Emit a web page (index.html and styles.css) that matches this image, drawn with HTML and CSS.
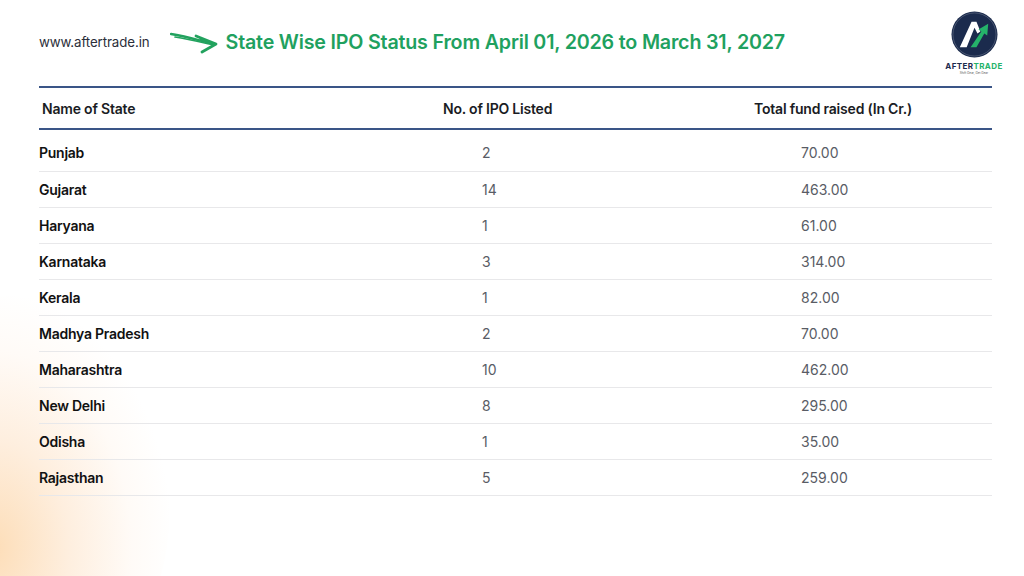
FILE: index.html
```html
<!DOCTYPE html>
<html lang="en">
<head>
<meta charset="utf-8">
<title>State Wise IPO Status</title>
<link rel="stylesheet" href="styles.css">
</head>
<body>
<div class="page">
  <div class="glow"></div>
  <header class="top">
    <div class="site">www.aftertrade.in</div>
    <svg class="arrow" viewBox="0 0 50 24" width="50" height="24" aria-hidden="true">
      <path d="M1 4 C 14 6, 28 10, 44 14" fill="none" stroke="#22a25e" stroke-width="2.4" stroke-linecap="round"/>
      <path d="M5 7 C 18 9, 30 12, 43 15" fill="none" stroke="#22a25e" stroke-width="1.6" stroke-linecap="round"/>
      <path d="M26 6 L 46 14 L 32 22" fill="none" stroke="#22a25e" stroke-width="2.8" stroke-linecap="round" stroke-linejoin="round"/>
      <path d="M30 9 L 42 14" fill="none" stroke="#22a25e" stroke-width="1.4" stroke-linecap="round"/>
    </svg>
    <h1 class="title">State Wise IPO Status From April 01, 2026 to March 31, 2027</h1>
    <div class="logo">
      <svg viewBox="0 0 48 48" width="47" height="47" aria-hidden="true">
        <circle cx="24" cy="24" r="23.5" fill="#1b2b4d"/>
        <circle cx="24" cy="24" r="22" fill="none" stroke="#ffffff" stroke-width="0.5" opacity="0.4"/>
        <polygon points="9,37 21,11 26,11 30,21 27,23 24,17 16,37" fill="#ffffff"/>
        <polygon points="20,37 31,21 28,19 38,13 37,25 34,23 26,37" fill="#25b36a"/>
      </svg>
      <div class="brand"><span class="after">AFTER</span><span class="trade">TRADE</span></div>
      <div class="tag">Shift Gear, Get Gear</div>
    </div>
  </header>

  <section class="table">
    <div class="row head">
      <div class="c1 h">Name of State</div>
      <div class="c2 h">No. of IPO Listed</div>
      <div class="c3 h">Total fund raised (In Cr.)</div>
    </div>
    <div class="row first"><div class="c1">Punjab</div><div class="c2 n">2</div><div class="c3 n">70.00</div></div>
    <div class="row"><div class="c1">Gujarat</div><div class="c2 n">14</div><div class="c3 n">463.00</div></div>
    <div class="row"><div class="c1">Haryana</div><div class="c2 n">1</div><div class="c3 n">61.00</div></div>
    <div class="row"><div class="c1">Karnataka</div><div class="c2 n">3</div><div class="c3 n">314.00</div></div>
    <div class="row"><div class="c1">Kerala</div><div class="c2 n">1</div><div class="c3 n">82.00</div></div>
    <div class="row"><div class="c1">Madhya Pradesh</div><div class="c2 n">2</div><div class="c3 n">70.00</div></div>
    <div class="row"><div class="c1">Maharashtra</div><div class="c2 n">10</div><div class="c3 n">462.00</div></div>
    <div class="row"><div class="c1">New Delhi</div><div class="c2 n">8</div><div class="c3 n">295.00</div></div>
    <div class="row"><div class="c1">Odisha</div><div class="c2 n">1</div><div class="c3 n">35.00</div></div>
    <div class="row"><div class="c1">Rajasthan</div><div class="c2 n">5</div><div class="c3 n">259.00</div></div>
  </section>
</div>
</body>
</html>
```
FILE: styles.css
```css
* { box-sizing: border-box; }
html, body { margin: 0; padding: 0; }
body {
  width: 1024px;
  height: 576px;
  overflow: hidden;
  background: #ffffff;
  font-family: "Inter", "Liberation Sans", sans-serif;
  color: #111;
}
.page {
  position: relative;
  width: 1024px;
  height: 576px;
  padding: 0 32px 0 39px;
  overflow: hidden;
}
.glow {
  position: absolute;
  left: -150px;
  bottom: -140px;
  width: 320px;
  height: 420px;
  border-radius: 50%;
  background: radial-gradient(ellipse at 45% 60%, rgba(252, 210, 160, 0.75) 0%, rgba(253, 222, 190, 0.5) 30%, rgba(255, 238, 222, 0.25) 55%, rgba(255, 255, 255, 0) 72%);
  pointer-events: none;
}
.top {
  position: relative;
  display: flex;
  align-items: center;
  height: 86px;
}
.site {
  font-size: 13.3px;
  color: #2c2f3a;
  letter-spacing: -0.1px;
  margin-top: -2px;
}
.arrow {
  margin-left: 20px;
  margin-right: 6px;
  margin-top: -2px;
}
.title {
  margin: 0;
  margin-top: -2px;
  font-size: 19.7px;
  font-weight: 600;
  color: #1fa15f;
  letter-spacing: -0.2px;
  white-space: nowrap;
}
.logo {
  position: absolute;
  right: -14px;
  top: 11px;
  width: 64px;
  display: flex;
  flex-direction: column;
  align-items: center;
}
.brand {
  margin-top: 4px;
  font-size: 8px;
  font-weight: 700;
  letter-spacing: 0.4px;
  line-height: 9px;
}
.after { color: #1b2b4d; }
.trade { color: #25b36a; }
.tag {
  font-size: 3px;
  color: #555;
  line-height: 4px;
}
.table {
  position: relative;
  width: 953px;
  border-top: 2px solid #3a5587;
}
.row {
  display: grid;
  grid-template-columns: 404px 311px 1fr;
  align-items: center;
  height: 36px;
  border-bottom: 1px solid #e8e8ea;
}
.row.head {
  height: 42px;
  border-bottom: 2px solid #3a5587;
}
.row.first { height: 42px; padding-top: 3px; }
.c1 {
  font-size: 14px;
  font-weight: 600;
  color: #111;
  letter-spacing: -0.25px;
}
.h { font-size: 14px; font-weight: 600; color: #1a1c24; letter-spacing: -0.2px; }
.head .c1 { padding-left: 3px; }
.n {
  font-size: 14px;
  font-weight: 400;
  color: #595c65;
}
.c2.n { padding-left: 39px; }
.c3.n { padding-left: 47px; }
```
